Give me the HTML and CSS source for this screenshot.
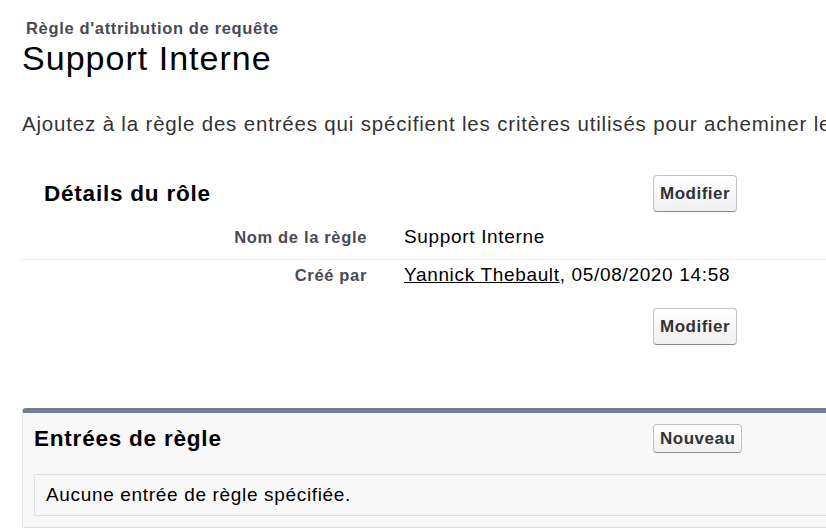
FILE: index.html
```html
<!DOCTYPE html>
<html lang="fr">
<head>
    <meta charset="UTF-8">
    <meta name="viewport" content="width=device-width, initial-scale=1.0">
    <title>Règle d'attribution de requête : Support Interne</title>
    <link rel="stylesheet" href="styles.css">
</head>
<body>
    <div class="page">
        <div class="page-header">
            <h2 class="record-type">Règle d'attribution de requête</h2>
            <h1 class="page-title">Support Interne</h1>
        </div>

        <p class="intro">Ajoutez à la règle des entrées qui spécifient les critères utilisés pour acheminer les requêtes vers des utilisateurs ou des files d'attente.</p>

        <div class="detail-block">
            <div class="block-header">
                <h3 class="block-title">Détails du rôle</h3>
                <button class="btn">Modifier</button>
            </div>
            <div class="detail-row detail-row-first">
                <div class="detail-label">Nom de la règle</div>
                <div class="detail-value">Support Interne</div>
            </div>
            <div class="detail-row">
                <div class="detail-label">Créé par</div>
                <div class="detail-value"><a href="#">Yannick Thebault</a>, 05/08/2020 14:58</div>
            </div>
            <div class="block-footer">
                <button class="btn">Modifier</button>
            </div>
        </div>

        <div class="related-list">
            <div class="block-header">
                <h3 class="block-title">Entrées de règle</h3>
                <button class="btn btn-small">Nouveau</button>
            </div>
            <div class="list-body">Aucune entrée de règle spécifiée.</div>
        </div>
    </div>
</body>
</html>
```

FILE: styles.css
```css
body {
    margin: 0;
    font-family: "Liberation Sans", Arial, Helvetica, sans-serif;
    color: #000;
    background-color: #fff;
    overflow: hidden;
}
.page {
    width: 1240px;
    padding-top: 19px;
}
.page-header {
    padding-left: 22px;
}
.record-type {
    margin: 0 0 2px 4px;
    font-size: 16.5px;
    line-height: 18px;
    font-weight: bold;
    letter-spacing: .04em;
    color: #4a4a56;
}
.page-title {
    margin: 0;
    font-size: 34px;
    line-height: 38px;
    font-weight: normal;
    letter-spacing: .03em;
}
.intro {
    margin: 35px 0 0 22px;
    font-size: 20.5px;
    line-height: 24px;
    letter-spacing: .04em;
    color: #333;
    white-space: nowrap;
}

/* blocs */
.detail-block {
    margin: 39px 0 0 22px;
}
.block-header {
    display: flex;
    align-items: center;
}
.detail-block .block-header {
    padding-left: 22px;
}
.block-title {
    margin: 0;
    font-size: 22.5px;
    font-weight: bold;
    letter-spacing: .035em;
}
.detail-block .block-title {
    width: 609px;
}
.related-list .block-title {
    width: 619px;
}
.detail-row {
    display: grid;
    grid-template-columns: 345px 1fr;
    column-gap: 37px;
    padding: 4px 0;
    line-height: 22px;
}
.detail-row-first {
    padding: 14px 0 11px;
    border-bottom: 1px solid #ececec;
}
.detail-label {
    text-align: right;
    font-size: 16.5px;
    font-weight: bold;
    letter-spacing: .04em;
    color: #4a4a56;
}
.detail-value {
    font-size: 19px;
    letter-spacing: .035em;
}
.detail-value a {
    color: #000;
}
.block-footer {
    margin-top: 18px;
    padding-left: 631px;
}

/* boutons */
.btn {
    height: 37px;
    padding: 0 6px;
    font-family: inherit;
    font-size: 17px;
    font-weight: bold;
    letter-spacing: .03em;
    color: #333;
    background: linear-gradient(#fff, #f0f0f0);
    border: 1px solid #c2c2c2;
    border-bottom-color: #8c8c8c;
    border-radius: 4px;
    cursor: pointer;
}
.btn-small {
    height: 29px;
    padding: 0 6px;
}

/* liste associée */
.related-list {
    margin: 63px 0 0 22px;
    padding: 11px 0 11px 11px;
    background-color: #f8f8f8;
    border: 1px solid #e0e3e5;
    border-top: 5px solid #747e96;
    border-radius: 4px;
}
.list-body {
    margin-top: 21px;
    padding: 9px 11px 9px;
    line-height: 22px;
    font-size: 19px;
    letter-spacing: .035em;
    background-color: #f8f8f8;
    border: 1px solid #e0e3e5;
}
```
